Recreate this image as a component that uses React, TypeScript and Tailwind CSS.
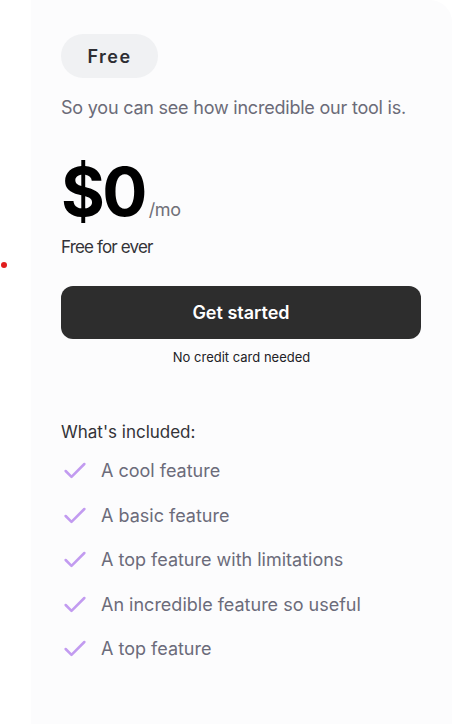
import { Check } from "lucide-react";

const features = [
  "A cool feature",
  "A basic feature",
  "A top feature with limitations",
  "An incredible feature so useful",
  "A top feature",
];

export default function App() {
  return (
    <div className="relative h-[724px] w-[456px] overflow-hidden bg-white font-['Inter',sans-serif]">
      <div className="absolute left-[1px] top-[262px] h-[6px] w-[6px] rounded-full bg-[#e11d1d]" />
      <div className="ml-[31px] h-full w-[421px] rounded-tr-[22px] bg-[#fcfcfd] px-[30px] pt-[34px]">
        <div className="flex h-[44px] w-[97px] items-center justify-center rounded-full bg-[#f0f1f3] text-[18px] font-semibold tracking-[0.08em] text-[#2e2e33]">
          Free
        </div>
        <p className="mt-[18px] text-[18px] leading-[24px] tracking-[-0.012em] text-[#6b6b78]">
          So you can see how incredible our tool is.
        </p>
        <div className="mt-[32px] flex items-baseline">
          <span className="text-[67px] font-bold leading-[80px] tracking-[-0.04em] text-black">$0</span>
          <span className="ml-[4px] text-[18px] tracking-[-0.02em] text-[#707078]">/mo</span>
        </div>
        <p className="mt-[3px] text-[17px] leading-[24px] tracking-[-0.05em] text-[#333338]">Free for ever</p>
        <button className="mt-[27px] flex h-[53px] w-[360px] items-center justify-center rounded-[12px] bg-[#2d2d2d] text-[18px] font-semibold text-white">
          Get started
        </button>
        <p className="mt-[9px] text-center text-[13px] leading-[18px] text-[#222226]">No credit card needed</p>
        <p className="mt-[54px] text-[17px] leading-[24px] text-[#333338]">What's included:</p>
        <ul className="mt-[13px] flex flex-col gap-[16.5px]">
          {features.map((f) => (
            <li key={f} className="flex items-center gap-[12px]">
              <Check className="h-[28px] w-[28px] text-[#c29bf0]" strokeWidth={2.2} />
              <span className="text-[18px] leading-[24px] text-[#6b6b7a]">{f}</span>
            </li>
          ))}
        </ul>
      </div>
    </div>
  );
}
